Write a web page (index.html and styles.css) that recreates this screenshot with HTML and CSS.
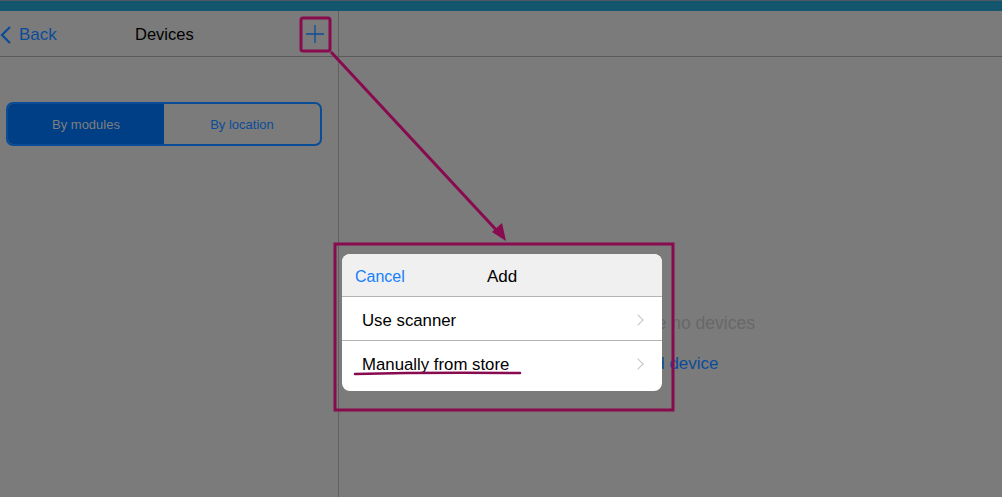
FILE: index.html
```html
<!DOCTYPE html>
<html lang="en">
<head>
    <meta charset="UTF-8">
    <title>Devices</title>
    <link rel="stylesheet" href="styles.css">
</head>
<body>
    <div class="statusbar"></div>
    <div class="main">
        <div class="sidebar">
            <div class="navbar">
                <a class="back" href="#">
                    <svg width="12" height="18" viewBox="0 0 12 18"><path d="M10 1 L2 9 L10 17" fill="none" stroke="#0b4c99" stroke-width="2.2"/></svg>
                    Back
                </a>
                <div class="nav-title">Devices</div>
                <button class="add-btn">
                    <svg width="20" height="20" viewBox="0 0 20 20"><path d="M10 1 V19 M1 10 H19" stroke="#0b4c99" stroke-width="1.3"/></svg>
                </button>
            </div>
            <div class="segmented">
                <div class="seg active">By modules</div>
                <div class="seg">By location</div>
            </div>
        </div>
        <div class="detail">
            <div class="navbar"></div>
            <div class="empty">
                <p class="empty-text">You have no devices</p>
                <a class="empty-link" href="#">Add device</a>
            </div>
        </div>
    </div>

    <div class="popover">
        <div class="popover-head">
            <span class="cancel">Cancel</span>
            <span class="popover-title">Add</span>
        </div>
        <div class="option">Use scanner <span class="chev"></span></div>
        <div class="option">Manually from store <span class="chev"></span></div>
    </div>

    <svg class="annotations" width="1002" height="497" viewBox="0 0 1002 497">
        <rect x="301" y="18" width="29" height="33" rx="2" fill="none" stroke="#880a4f" stroke-width="3"/>
        <line x1="331" y1="52" x2="500" y2="234" stroke="#880a4f" stroke-width="3"/>
        <polygon points="506,241 492,232 502,223" fill="#880a4f"/>
        <rect x="335" y="244" width="338" height="166" fill="none" stroke="#880a4f" stroke-width="3"/>
        <path d="M355 374 Q430 372 520 373" fill="none" stroke="#880a4f" stroke-width="2.5" stroke-linecap="round"/>
    </svg>
</body>
</html>
```

FILE: styles.css
```css
body {
    margin: 0;
    width: 1002px;
    height: 497px;
    overflow: hidden;
    background-color: #7b7b7b;
    font-family: 'Liberation Sans', Arial, sans-serif;
    color: #000;
    position: relative;
}
.statusbar {
    height: 11px;
    background-color: #15566f;
    border-top: 1px solid #4d5a66;
    box-sizing: border-box;
}
.main {
    display: flex;
    height: 486px;
}
.sidebar {
    width: 338px;
    border-right: 1px solid #606060;
}
.detail {
    flex: 1;
    display: flex;
    flex-direction: column;
}
.navbar {
    height: 46px;
    padding-top: 2px;
    border-bottom: 1px solid #5a5a5a;
    display: flex;
    align-items: center;
    position: relative;
    box-sizing: border-box;
}
.back {
    display: flex;
    align-items: center;
    gap: 7px;
    color: #0b4c99;
    text-decoration: none;
    font-size: 17px;
}
.nav-title {
    position: absolute;
    left: 135px;
    font-size: 16.5px;
}
.add-btn {
    margin-left: auto;
    margin-right: 12px;
    background: none;
    border: none;
    padding: 0;
    width: 22px;
    height: 22px;
    display: flex;
    align-items: center;
    justify-content: center;
    margin-top: -2px;
}
.segmented {
    display: flex;
    margin: 45px 16px 0 6px;
    height: 44px;
    border: 2px solid #0b4c99;
    border-radius: 7px;
    overflow: hidden;
    box-sizing: border-box;
}
.seg {
    flex: 1;
    display: flex;
    align-items: center;
    justify-content: center;
    font-size: 13px;
    color: #0b4c99;
}
.seg.active {
    background-color: #003f86;
    color: #7f7f7f;
}
.empty {
    display: flex;
    flex-direction: column;
    align-items: center;
    padding-top: 256px;
    padding-left: 4px;
}
.empty-text {
    margin: 0 0 0 4px;
    font-size: 17.5px;
    color: #686868;
}
.empty-link {
    margin-top: 20px;
    font-size: 17px;
    color: #0b4c99;
    text-decoration: none;
    padding-left: 8px;
}
.popover {
    position: absolute;
    left: 342px;
    top: 254px;
    width: 320px;
    height: 137px;
    background-color: #fff;
    border-radius: 8px;
    overflow: hidden;
}
.popover-head {
    height: 43px;
    padding-top: 3px;
    background-color: #f0f0f0;
    border-bottom: 1px solid #b5b5b5;
    display: flex;
    align-items: center;
    position: relative;
    box-sizing: border-box;
}
.cancel {
    color: #157efb;
    font-size: 16px;
    padding-left: 13px;
}
.popover-title {
    position: absolute;
    left: 0;
    right: 0;
    text-align: center;
    font-size: 17px;
    pointer-events: none;
}
.option {
    height: 44px;
    padding-top: 4px;
    display: flex;
    align-items: center;
    padding-left: 20px;
    font-size: 16.8px;
    border-bottom: 1px solid #b5b5b5;
    position: relative;
    box-sizing: border-box;
}
.option:last-child {
    border-bottom: none;
}
.chev {
    position: absolute;
    right: 20px;
    top: 19px;
    width: 7px;
    height: 7px;
    border-top: 1.5px solid #c4c4c8;
    border-right: 1.5px solid #c4c4c8;
    transform: rotate(45deg);
}
.annotations {
    position: absolute;
    left: 0;
    top: 0;
    pointer-events: none;
}
```
